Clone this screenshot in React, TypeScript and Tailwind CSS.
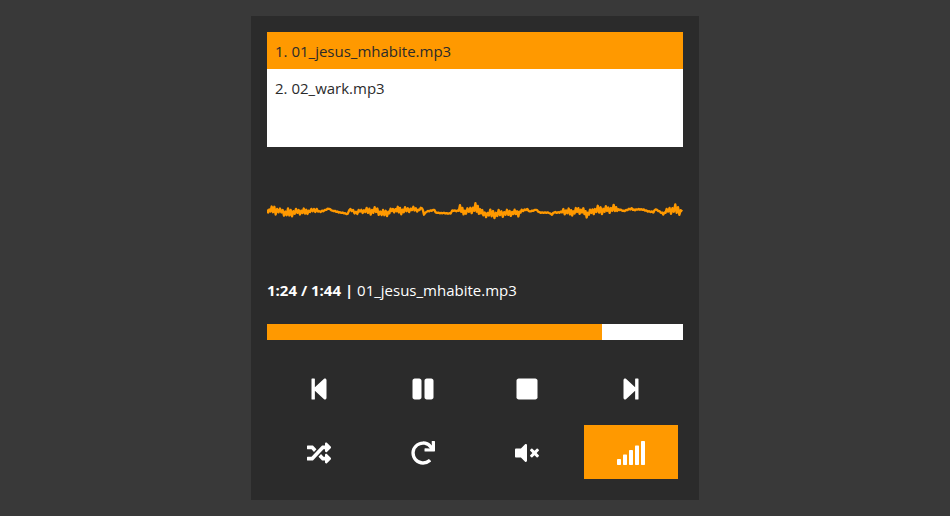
import type { ReactNode } from "react";
import {
  FaPause,
  FaRandom,
  FaRedo,
  FaStepBackward,
  FaStepForward,
  FaStop,
  FaVolumeMute,
} from "react-icons/fa";

const tracks = ["01_jesus_mhabite.mp3", "02_wark.mp3"];

// Each sample is [x, centre, swing] of the signal.
const samples: [number, number, number][] = [
  [0, 61, 5], [14, 59, 8], [26, 57, 12], [39, 62, 7], [59, 69, 11], [79, 65, 9], [99, 64, 8],
  [114, 64, 7], [129, 62, 5], [149, 58, 6], [157, 65, 2], [186, 55, 1], [196, 61, 1],
  [219, 66, 1], [242, 71, 1], [247, 58, 2], [254, 60, 3], [271, 67, 6], [279, 62, 5],
  [299, 62, 7], [319, 61, 10], [331, 61, 10], [344, 70, 8], [364, 66, 8], [374, 60, 6],
  [389, 59, 7], [399, 60, 9], [414, 60, 9], [439, 56, 5], [454, 59, 4], [465, 53, 2],
  [471, 71, 2], [479, 64, 1], [502, 58, 1], [506, 67, 1], [539, 69, 1], [551, 69, 1],
  [556, 61, 1], [572, 61, 2], [579, 56, 9], [597, 65, 8], [614, 57, 11], [629, 54, 13],
  [639, 59, 9], [649, 72, 8], [674, 70, 10], [699, 70, 11], [724, 68, 7], [739, 66, 8],
  [754, 69, 9], [764, 62, 3], [781, 56, 1], [787, 64, 1], [807, 58, 1], [817, 66, 1],
  [834, 67, 1], [846, 67, 1], [855, 73, 1], [861, 66, 1], [881, 66, 2], [889, 62, 9],
  [909, 66, 8], [919, 65, 8], [934, 60, 10], [949, 63, 7], [959, 71, 8], [969, 66, 8],
  [984, 60, 10], [1009, 58, 10], [1024, 58, 10], [1044, 55, 9], [1054, 57, 2], [1069, 62, 1],
  [1094, 55, 2], [1104, 59, 1], [1119, 56, 2], [1134, 60, 1], [1159, 66, 2], [1166, 56, 1],
  [1174, 62, 1], [1189, 70, 2], [1199, 62, 6], [1212, 58, 12], [1229, 58, 12], [1245, 63, 8],
];

function wavePoints() {
  const points: string[] = [];
  const jitter = [-0.5, 0.8, -0.3, 0.4, -1, 0.6, -0.6, 1, -0.2, 0.5, -0.8, 0.3];
  let n = 0;
  for (let i = 0; i < samples.length - 1; i++) {
    const [x0, y0, a0] = samples[i];
    const [x1, y1, a1] = samples[i + 1];
    const steps = Math.max(1, Math.round((x1 - x0) / 4));
    for (let s = 0; s < steps; s++) {
      const t = s / steps;
      const swing = 1.3 * (a0 + (a1 - a0) * t);
      const y = y0 + (y1 - y0) * t + swing * jitter[n++ % jitter.length];
      points.push(`${(x0 + (x1 - x0) * t).toFixed(1)},${(y + 82).toFixed(1)}`);
    }
  }
  points.push("1246,145");
  return points.join(" ");
}

function SignalBars() {
  return (
    <svg viewBox="0 0 28 24" className="h-6 w-7 shrink-0" fill="currentColor" aria-hidden="true">
      <rect x="0" y="18" width="4" height="6" rx="0.7" />
      <rect x="6" y="13.5" width="4" height="10.5" rx="0.7" />
      <rect x="12" y="9" width="4" height="15" rx="0.7" />
      <rect x="18" y="4.5" width="4" height="19.5" rx="0.7" />
      <rect x="24" y="0" width="4" height="24" rx="0.7" />
    </svg>
  );
}

function Control({ label, active, children }: { label: string; active?: boolean; children: ReactNode }) {
  return (
    <button
      type="button"
      aria-label={label}
      className={`m-[5px] flex h-[54px] items-center justify-center pt-0.5 text-2xl text-white ${
        active ? "bg-[#ff9900]" : "bg-transparent"
      }`}
    >
      {children}
    </button>
  );
}

export default function App() {
  return (
    <main className="min-h-screen bg-[#393939] py-4 font-['Segoe_UI','Open_Sans',sans-serif] text-[15px] leading-6">
      <section className="mx-auto w-full max-w-md bg-[#2b2b2b] p-4">
        <ol className="min-h-[115px] bg-white text-[#2b2b2b]">
          {tracks.map((track, i) => (
            <li key={track}>
              <button
                type="button"
                className={`block h-[37px] w-full px-2 text-left ${i === 0 ? "bg-[#ff9900]" : "bg-white"}`}
              >
                {i + 1}. {track}
              </button>
            </li>
          ))}
        </ol>

        <svg viewBox="0 0 1248 288" className="mt-4 block w-full" aria-hidden="true">
          <polyline points={wavePoints()} fill="none" stroke="#ff9900" strokeWidth="7" strokeLinejoin="round" />
        </svg>

        <p className="mt-[19px] text-white">
          <strong className="font-bold">1:24 / 1:44 |</strong> {tracks[0]}
        </p>

        <progress
          aria-label="Playback position"
          value={83.75}
          max={104}
          className="mt-[22px] block h-4 w-full appearance-none border-0 bg-white [&::-webkit-progress-bar]:bg-white [&::-webkit-progress-value]:bg-[#ff9900]"
        />

        <div className="mt-4 grid grid-cols-4">
          <Control label="Previous"><FaStepBackward /></Control>
          <Control label="Pause"><FaPause /></Control>
          <Control label="Stop"><FaStop /></Control>
          <Control label="Next"><FaStepForward /></Control>
          <Control label="Shuffle"><FaRandom /></Control>
          <Control label="Repeat"><FaRedo /></Control>
          <Control label="Mute"><FaVolumeMute /></Control>
          <Control label="Visualizer" active><SignalBars /></Control>
        </div>
      </section>
    </main>
  );
}
